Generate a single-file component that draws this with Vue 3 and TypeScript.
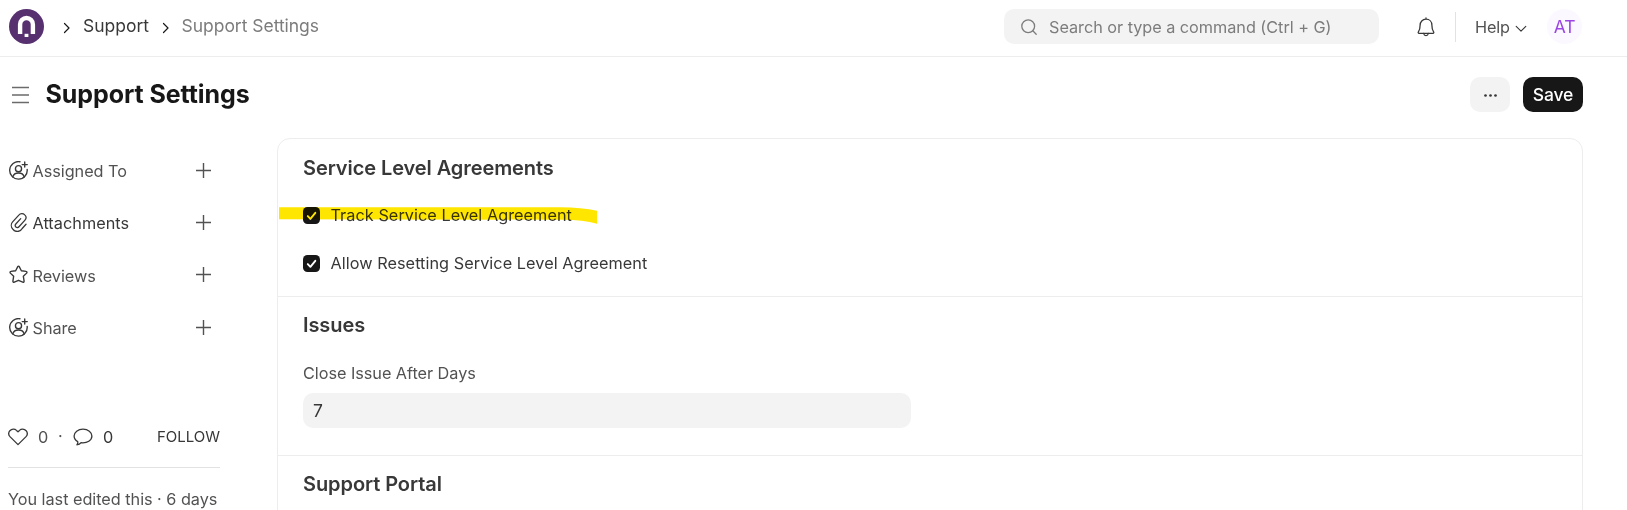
<script setup lang="ts">
import { ref } from 'vue'

type IconName = 'user' | 'clip' | 'star'
interface SideItem { label: string; icon: IconName; strong?: boolean }

const sideItems: SideItem[] = [
  { label: 'Assigned To', icon: 'user' },
  { label: 'Attachments', icon: 'clip', strong: true },
  { label: 'Reviews', icon: 'star' },
  { label: 'Share', icon: 'user' },
]

const checks = ref([
  { label: 'Track Service Level Agreement', on: true, marked: true },
  { label: 'Allow Resetting Service Level Agreement', on: true, marked: false },
])
const closeAfter = ref('7')
</script>

<template>
  <div class="page">
    <header class="navbar">
      <svg class="logo" viewBox="0 0 35 35">
        <circle cx="17.5" cy="17.5" r="17.5" fill="#56306f" />
        <path d="M11.1 25V15.4a6.4 6.4 0 0 1 12.8 0V25" fill="none" stroke="#fff" stroke-width="4.4" />
        <rect x="15.6" y="24.8" width="3.8" height="3.2" fill="#fff" />
      </svg>
      <svg class="crumb-arrow first" viewBox="0 0 8 12"><path d="M1.5 1.500 6 6 1.500 10.500" /></svg>
      <span class="crumb">Support</span>
      <svg class="crumb-arrow second" viewBox="0 0 8 12"><path d="M1.5 1.500 6 6 1.500 10.500" /></svg>
      <span class="crumb current">Support Settings</span>

      <div class="search">
        <svg viewBox="0 0 16 16"><circle cx="7.2" cy="7.2" r="6.4" /><path d="m11.8 11.8 3.4 3.4" /></svg>
        <span>Search or type a command (Ctrl + G)</span>
      </div>
      <svg class="bell" viewBox="0 0 18 20">
        <path d="M9 .9v1.200M9 2.200c3.500 0 5.900 2.600 5.900 6 0 3.600.7 5.400 1.700 6.700.4.600.2 1.500-.6 1.500H2c-.8 0-1-.9-.6-1.500 1-1.300 1.700-3.100 1.700-6.700 0-3.400 2.400-6 5.900-6Z" />
        <path d="M6.700 16.500c.2 1.300 1.100 2.100 2.300 2.100s2.100-.8 2.300-2.100" />
      </svg>
      <span class="divider"></span>
      <span class="help">Help</span>
      <svg class="help-arrow" viewBox="0 0 12 8"><path d="m1.200 1.300 4.800 4.900 4.800-4.900" /></svg>
      <span class="avatar">AT</span>
    </header>

    <div class="page-head">
      <svg class="burger" viewBox="0 0 17 18"><path d="M0 1.500h17M0 9h17M0 16.500h17" /></svg>
      <h1>Support Settings</h1>
      <button class="btn more" aria-label="Menu">
        <svg viewBox="0 0 13 3"><circle cx="1.500" cy="1.500" r="1.350" /><circle cx="6.500" cy="1.500" r="1.350" /><circle cx="11.500" cy="1.500" r="1.350" /></svg>
      </button>
      <button class="btn save">Save</button>
    </div>

    <div class="body">
      <aside class="sidebar">
        <div v-for="item in sideItems" :key="item.label" class="side-row" :class="{ strong: item.strong }">
          <svg v-if="item.icon === 'user'" class="side-icon" viewBox="0 0 18 18">
            <path d="M10.400.7A8.300 8.300 0 1 0 17.200 7.900M14.900 1v4.800M12.500 3.400h4.800" />
            <circle cx="9" cy="7.300" r="2.900" />
            <path d="M3.500 15.100c.8-2.400 2.700-3.700 5.500-3.700s4.700 1.300 5.500 3.700" />
          </svg>
          <svg v-else-if="item.icon === 'clip'" class="side-icon" viewBox="0 0 24 24">
            <path class="clip" d="m21.500 14.200-4.800 5.400a7 7 0 0 1-11.900.8 6.700 6.700 0 0 1-.2-9.100l7.800-8.600a5 5 0 0 1 7.500-.3 4.800 4.800 0 0 1 .3 6.600l-7.600 8.400a2.700 2.700 0 0 1-3.900.2 2.700 2.700 0 0 1-.1-3.700l6.200-6.800" />
          </svg>
          <svg v-else class="side-icon" viewBox="0 0 18 18">
            <path d="M8.300 1.500c.3-.6 1.100-.6 1.400 0l2 3.900 4.500.7c.8.100 1.100 1 .5 1.600l-3.100 3 .7 4.600c.1.800-.6 1.300-1.300 1L9 14.500l-4 1.800c-.7.3-1.400-.2-1.300-1l.7-4.600-3.100-3c-.6-.6-.3-1.500.5-1.600l4.500-.7Z" />
          </svg>
          <span class="side-label">{{ item.label }}</span>
          <svg class="plus" viewBox="0 0 15 15"><path d="M7.500 0v15M0 7.500h15" /></svg>
        </div>

        <div class="stats">
          <svg class="heart" viewBox="0 0 20 18"><path d="M10 16.600 2.200 8.900C.5 7.100.4 4.500 1.900 2.700c1.800-2 4.800-2.100 6.600-.3L10 3.700l1.500-1.300c1.800-1.800 4.800-1.700 6.600.3 1.500 1.800 1.400 4.400-.3 6.200Z" /></svg>
          <span class="like">0</span>
          <span class="dot">·</span>
          <svg class="bubble" viewBox="0 0 20 18"><path d="M10 1.200c-5 0-8.900 3-8.900 6.800 0 2.400 1.500 4.400 3.600 5.600.5 1-.1 2.200-.8 3.200 1.800 0 3.300-.8 4.200-2.100 6.200.7 10.800-2.400 10.800-6.700 0-3.800-3.900-6.800-8.900-6.800Z" /></svg>
          <span class="comments">0</span>
          <span class="follow">FOLLOW</span>
        </div>
        <p class="edited">You last edited this · 6 days</p>
      </aside>

      <main class="card">
        <section class="agreements">
          <h2>Service Level Agreements</h2>
          <label v-for="c in checks" :key="c.label" class="check">
            <svg class="box" viewBox="0 0 17 17">
              <rect width="17" height="17" rx="4.500" fill="#171717" />
              <path d="m4.800 9.100 2.600 2.700 4.900-6" fill="none" stroke="#fff" stroke-width="1.900" stroke-linecap="round" stroke-linejoin="round" />
            </svg>
            <span>{{ c.label }}</span>
            <svg v-if="c.marked" class="marker" viewBox="0 0 318 17">
              <path d="M0 .3H281Q303 .3 318 3.800V16.700Q304 12.700 284 12.700L0 12.300Z" fill="#ffe600" />
            </svg>
          </label>
        </section>
        <section class="issues">
          <h2>Issues</h2>
          <div class="field-label">Close Issue After Days</div>
          <div class="field">{{ closeAfter }}</div>
        </section>
        <section class="portal">
          <h2>Support Portal</h2>
        </section>
      </main>
    </div>
  </div>
</template>

<style>
body { margin: 0; background: #fff; }
</style>

<style scoped>
* { box-sizing: border-box; }
.page {
  width: 1627px;
  height: 510px;
  overflow: hidden;
  background: #fff;
  color: #383838;
  font-family: Inter, "Liberation Sans", sans-serif;
  font-size: 16.25px;
  font-weight: 420;
}
svg { display: block; flex: none; fill: none; stroke: #383838; stroke-width: 1.3; stroke-linecap: round; stroke-linejoin: round; }
.navbar {
  display: flex;
  align-items: center;
  height: 57px;
  padding: 0 45px 3px 9px;
  border-bottom: 1px solid #ededed;
  font-size: 17.5px;
  line-height: 22px;
  white-space: nowrap;
}
.logo { width: 35px; height: 35px; stroke: none; }
.logo path { stroke-linecap: butt; }
.crumb-arrow { width: 8px; height: 12px; stroke: #171717; stroke-width: 1.2; }
.crumb-arrow.first { margin: 2px 0 0 19px; }
.crumb-arrow.second { margin: 2px 0 0 13.5px; }
.crumb { width: 65px; margin: 0 0 1px 12px; }
.crumb.current { width: auto; margin-left: 12px; color: #7c7c7c; letter-spacing: -.03px; }
.search {
  display: flex;
  align-items: center;
  gap: 12px;
  width: 375px;
  height: 35px;
  margin-left: auto;
  padding-left: 17px;
  border-radius: 10px;
  background: #f3f3f3;
  color: #7c7c7c;
  font-size: 16.25px;
  letter-spacing: -.03px;
}
.search svg { width: 16px; height: 16px; stroke: #7c7c7c; }
.bell { width: 18px; height: 20px; margin-left: 38px; }
.divider { width: 1px; height: 30px; margin-left: 20px; background: #e2e2e2; }
.help { width: 35px; margin: 1px 0 0 19px; color: #525252; font-size: 16.25px; letter-spacing: -.15px; }
.help-arrow { width: 12px; height: 8px; margin: 5px 0 0 5px; stroke-width: 1.1; }
.avatar {
  width: 35px;
  height: 35px;
  margin-left: 20px;
  border-radius: 50%;
  background: #fbf8ff;
  color: #9c45e3;
  line-height: 35px;
  text-align: center;
  letter-spacing: -.3px;
}
.page-head { display: flex; align-items: center; height: 75px; padding: 0 44px 0 12px; }
.burger { width: 17px; height: 18px; stroke: #6b6b6b; stroke-width: 1.3; stroke-linecap: butt; }
h1 { margin: 0 auto 2px 16.5px; color: #171717; font-size: 25px; font-weight: 700; line-height: 30px; letter-spacing: -.08px; }
.btn { height: 35px; padding: 0; border: 0; border-radius: 10px; font: 500 17.5px/34px Inter, sans-serif; }
.more { display: flex; align-items: center; justify-content: center; width: 40px; background: #f3f3f3; }
.more svg { width: 13px; height: 3px; margin-top: 1px; fill: #383838; stroke: none; }
.save { width: 60px; margin-left: 13px; background: #171717; color: #fff; letter-spacing: -.15px; }
.body { display: flex; }
.sidebar { width: 212px; margin: 13px 57px 0 8px; }
.side-row { display: flex; align-items: center; height: 52.4px; color: #525252; letter-spacing: -.04px; }
.side-row.strong { color: #383838; letter-spacing: .03px; }
.side-row.strong .side-label { margin-bottom: 1px; }
.side-icon { width: 19px; height: 19px; margin: -2px 0 0 .5px; }
.clip { stroke-width: 1.6; }
.side-label { margin-left: 5px; }
.plus { width: 15px; height: 15px; margin: -2px 9px 0 auto; stroke-width: 1.4; stroke-linecap: butt; stroke: #525252; }
.stats { display: flex; align-items: center; height: 62px; margin-top: 51px; border-bottom: 1px solid #e2e2e2; color: #525252; }
.heart, .bubble { width: 20px; height: 18px; margin-top: 2px; }
.like { width: 20px; margin: 1px 0 0 10px; }
.dot { width: 15px; }
.comments { margin: 1px 0 0 10px; color: #383838; }
.follow { margin-left: auto; color: #383838; font-size: 15px; }
.edited { margin: 21px 0 0; color: #525252; line-height: 21px; white-space: nowrap; letter-spacing: -.03px; }
.card { width: 1306px; height: 400px; margin-top: 6px; border: 1px solid #ededed; border-radius: 13px; }
section { padding: 0 25px; border-bottom: 1px solid #ededed; }
h2 { margin: 0; color: #383838; font-size: 20px; font-weight: 600; line-height: 28px; letter-spacing: -.08px; }
.agreements { height: 158px; padding-top: 15px; }
.check { position: relative; display: flex; align-items: center; width: 500px; height: 20px; margin-bottom: 28px; letter-spacing: .05px; }
.agreements h2 { margin-bottom: 23px; }
.check span { margin-left: 10.5px; }
.box { width: 17px; height: 17px; stroke: none; }
.marker { position: absolute; left: -24px; top: 2px; width: 318px; height: 17px; stroke: none; mix-blend-mode: multiply; }
.issues { height: 159px; padding-top: 14px; }
.field-label { height: 20px; margin: 24px 0 10px; color: #525252; line-height: 20px; letter-spacing: -.04px; }
.field { width: 608px; height: 35px; padding-left: 10px; border-radius: 10px; background: #f3f3f3; font-size: 17.5px; line-height: 35px; }
.portal { padding-top: 14px; border: 0; }
</style>
